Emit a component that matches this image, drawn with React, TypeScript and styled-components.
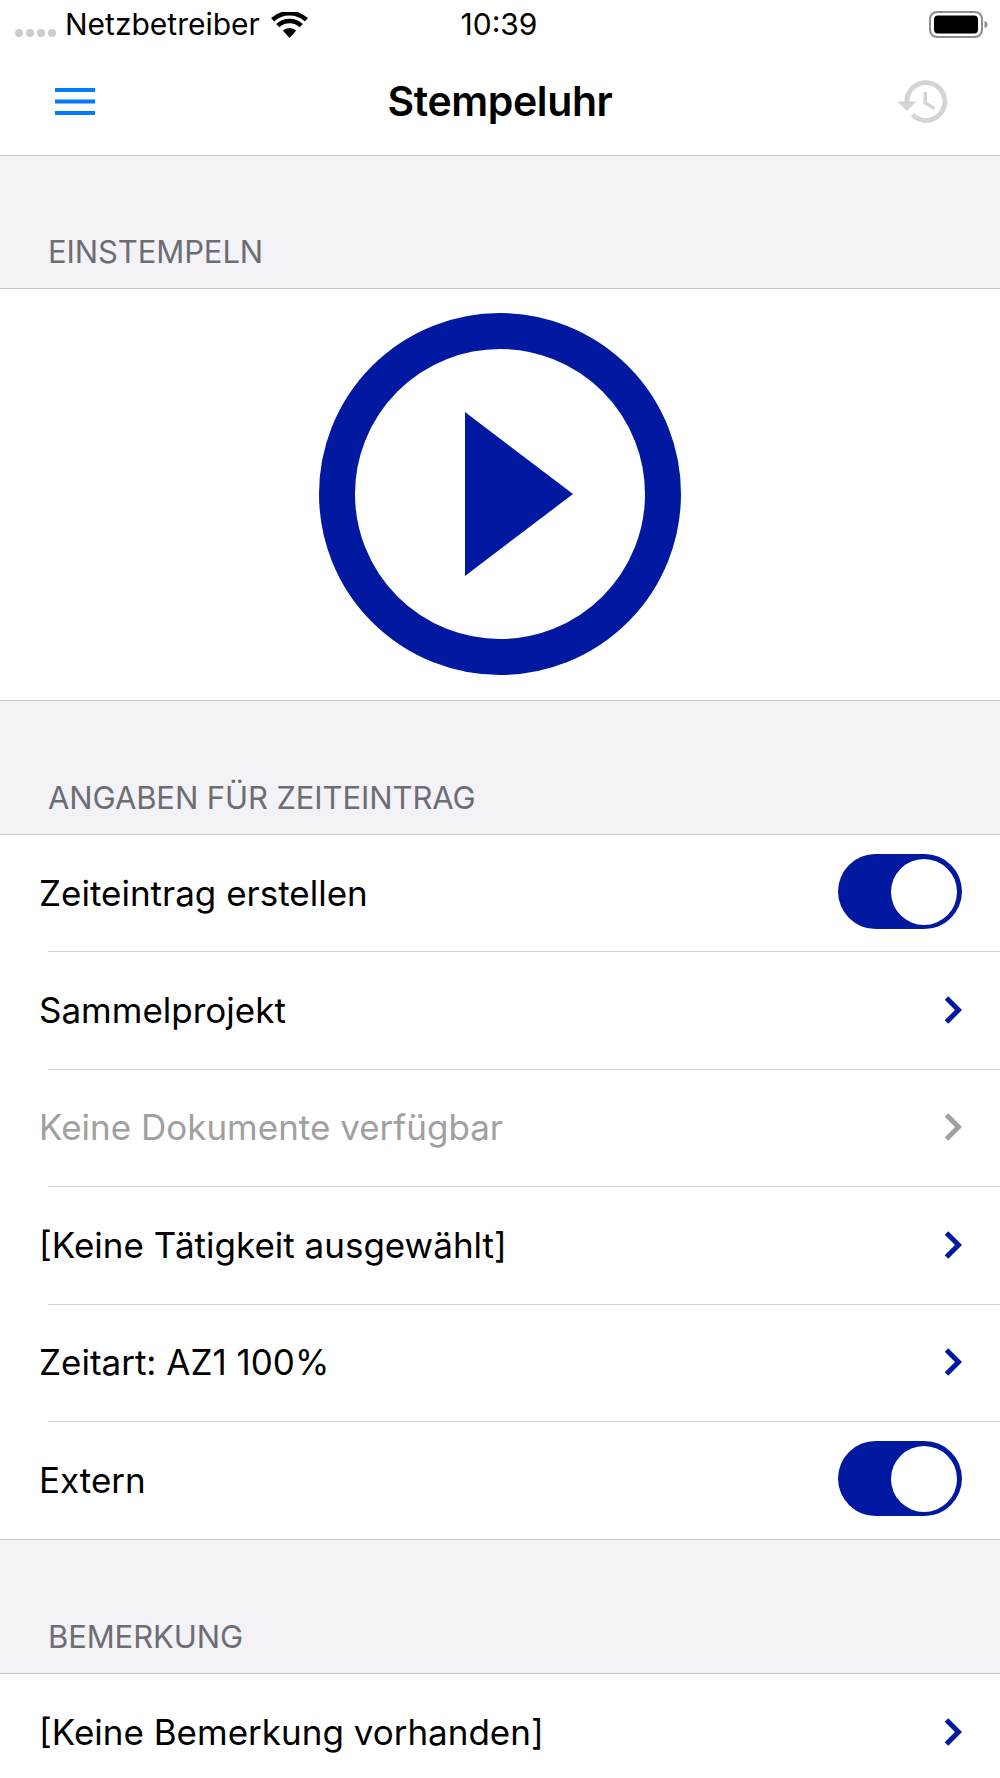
import React from 'react';
import styled, { createGlobalStyle } from 'styled-components';

const BRAND = '#0019a0';

const GlobalStyle = createGlobalStyle`
  html, body {
    margin: 0;
    padding: 0;
    background: #ffffff;
  }
  body {
    font-family: Inter, "Liberation Sans", sans-serif;
    color: #000000;
  }
`;

const Screen = styled.div`
  width: 1000px;
  height: 1778px;
  overflow: hidden;
  background: #ffffff;
`;

const StatusBar = styled.div`
  display: flex;
  align-items: center;
  height: 49px;
  padding: 0 12px 0 15px;
  box-sizing: border-box;
  font-size: 30px;
`;

const StatusSide = styled.div<{ $end?: boolean }>`
  flex: 1;
  display: flex;
  align-items: center;
  justify-content: ${({ $end }) => ($end ? 'flex-end' : 'flex-start')};
`;

const SignalDots = styled.div`
  display: flex;
  gap: 3px;
  margin: 16px 9px 0 0;
`;

const SignalDot = styled.span`
  width: 8px;
  height: 8px;
  border-radius: 50%;
  background: #cccccc;
`;

const Carrier = styled.span`
  margin: 0 11px 2px 0;
`;

const Clock = styled.span`
  margin: 0 5px 2px 0;
`;

const NavBar = styled.header`
  display: flex;
  align-items: center;
  height: 107px;
  padding: 0 48px 2px 55px;
  box-sizing: border-box;
  border-bottom: 1px solid #c8c7cc;
`;

const NavSide = styled.div<{ $end?: boolean }>`
  flex: 1;
  display: flex;
  justify-content: ${({ $end }) => ($end ? 'flex-end' : 'flex-start')};
`;

const NavTitle = styled.h1`
  margin: 0 7px 0 0;
  font-size: 41px;
  font-weight: 600;
  letter-spacing: -0.4px;
`;

const SectionHeader = styled.div<{ $height: number }>`
  display: flex;
  align-items: flex-end;
  height: ${({ $height }) => $height}px;
  padding: 0 0 19px 48px;
  box-sizing: border-box;
  background: #f2f2f7;
  border-bottom: 1px solid #c8c7cc;
  color: #6d6d72;
  font-size: 31px;
  line-height: 34px;
  letter-spacing: -0.1px;
`;

const PlayArea = styled.div`
  display: flex;
  align-items: center;
  justify-content: center;
  height: 412px;
  padding-bottom: 2px;
  box-sizing: border-box;
  background: #ffffff;
  border-bottom: 1px solid #c8c7cc;
`;

const Group = styled.section`
  border-bottom: 1px solid #c8c7cc;
`;

const Row = styled.div<{ $disabled?: boolean }>`
  position: relative;
  display: flex;
  align-items: center;
  justify-content: space-between;
  height: 117.4px;
  padding: 0 38px 2px 39px;
  box-sizing: border-box;
  font-size: 35px;
  color: ${({ $disabled }) => ($disabled ? '#a0a0a0' : '#000000')};

  &:not(:last-child)::after {
    content: "";
    position: absolute;
    left: 48px;
    right: 0;
    bottom: 0;
    height: 1px;
    background: #d0d0d4;
  }
`;

const ToggleTrack = styled.div`
  display: flex;
  align-items: center;
  justify-content: flex-end;
  width: 124px;
  height: 75px;
  margin: 0 0 2px 0;
  padding-right: 5px;
  box-sizing: border-box;
  border-radius: 38px;
  background: ${BRAND};
`;

const ToggleKnob = styled.div`
  width: 66px;
  height: 66px;
  border-radius: 50%;
  background: #ffffff;
`;

const Toggle: React.FC = () => (
  <ToggleTrack>
    <ToggleKnob />
  </ToggleTrack>
);

const Chevron: React.FC<{ color?: string }> = ({ color = BRAND }) => (
  <svg width="18" height="28" viewBox="0 0 18 28">
    <path d="M2.5 2 L14.5 14 L2.5 26" fill="none" stroke={color} strokeWidth="5" />
  </svg>
);

const WifiIcon: React.FC = () => (
  <svg width="37" height="26" viewBox="0 0 37 26">
    <path d="M18.5 26 L11.8 18.6 A10 10 0 0 1 25.2 18.6 Z" fill="#000" />
    <path d="M6.8 13.6 A17 17 0 0 1 30.2 13.6" fill="none" stroke="#000" strokeWidth="4.6" />
    <path d="M1.6 7.8 A25 25 0 0 1 35.4 7.8" fill="none" stroke="#000" strokeWidth="4.6" />
  </svg>
);

const BatteryIcon: React.FC = () => (
  <svg width="59" height="27" viewBox="0 0 59 27">
    <rect x="1" y="1" width="52" height="25" rx="7" fill="none" stroke="#8e8e8e" strokeWidth="2" />
    <rect x="5" y="4.5" width="44" height="18" rx="4" fill="#000" />
    <path d="M55.5 10 C57.5 10.5 58.5 12 58.5 13.5 C58.5 15 57.5 16.5 55.5 17 Z" fill="#8e8e8e" />
  </svg>
);

const MenuIcon: React.FC = () => (
  <svg width="40" height="27" viewBox="0 0 40 27">
    <rect x="0" y="0" width="40" height="4" fill="#007aff" />
    <rect x="0" y="11.5" width="40" height="4" fill="#007aff" />
    <rect x="0" y="23" width="40" height="4" fill="#007aff" />
  </svg>
);

const HistoryIcon: React.FC = () => (
  <svg width="57" height="57" viewBox="0 0 24 24" fill="#d4d4d4">
    <path d="M13 3c-4.97 0-9 4.03-9 9H1l3.89 3.89.07.14L9 12H6c0-3.87 3.13-7 7-7s7 3.13 7 7-3.13 7-7 7c-1.93 0-3.68-.79-4.94-2.06l-1.42 1.42C8.27 19.99 10.51 21 13 21c4.97 0 9-4.03 9-9s-4.03-9-9-9zm-1 5v5l4.28 2.54.72-1.21-3.5-2.08V8H12z" />
  </svg>
);

const PlayIcon: React.FC = () => (
  <svg width="362" height="362" viewBox="0 0 362 362">
    <circle cx="181" cy="181" r="163" fill="none" stroke={BRAND} strokeWidth="36" />
    <path d="M146 99 L254 181 L146 263 Z" fill={BRAND} />
  </svg>
);

const App: React.FC = () => (
  <Screen>
    <GlobalStyle />
    <StatusBar>
      <StatusSide>
        <SignalDots>
          <SignalDot />
          <SignalDot />
          <SignalDot />
          <SignalDot />
        </SignalDots>
        <Carrier>Netzbetreiber</Carrier>
        <WifiIcon />
      </StatusSide>
      <Clock>10:39</Clock>
      <StatusSide $end>
        <BatteryIcon />
      </StatusSide>
    </StatusBar>

    <NavBar>
      <NavSide>
        <MenuIcon />
      </NavSide>
      <NavTitle>Stempeluhr</NavTitle>
      <NavSide $end>
        <HistoryIcon />
      </NavSide>
    </NavBar>

    <SectionHeader $height={133}>EINSTEMPELN</SectionHeader>
    <PlayArea>
      <PlayIcon />
    </PlayArea>

    <SectionHeader $height={134}>ANGABEN FÜR ZEITEINTRAG</SectionHeader>
    <Group>
      <Row>
        Zeiteintrag erstellen
        <Toggle />
      </Row>
      <Row>
        Sammelprojekt
        <Chevron />
      </Row>
      <Row $disabled>
        Keine Dokumente verfügbar
        <Chevron color="#a0a0a0" />
      </Row>
      <Row>
        [Keine Tätigkeit ausgewählt]
        <Chevron />
      </Row>
      <Row>
        Zeitart: AZ1 100%
        <Chevron />
      </Row>
      <Row>
        Extern
        <Toggle />
      </Row>
    </Group>

    <SectionHeader $height={134}>BEMERKUNG</SectionHeader>
    <Group>
      <Row>
        [Keine Bemerkung vorhanden]
        <Chevron />
      </Row>
    </Group>
  </Screen>
);

export default App;
